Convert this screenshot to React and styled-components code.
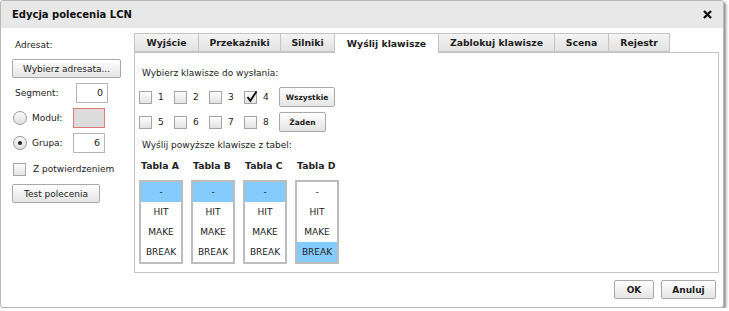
import React from 'react'
import styled, { createGlobalStyle } from 'styled-components'

const GlobalStyle = createGlobalStyle`
  html, body {
    margin: 0;
    padding: 0;
    background: #fff;
  }
  body {
    font-family: "DejaVu Sans", Verdana, sans-serif;
    font-size: 9px;
    color: #222;
  }
`

const tabs = [
  { label: 'Wyjście', width: 65 },
  { label: 'Przekaźniki', width: 83 },
  { label: 'Silniki', width: 55 },
  { label: 'Wyślij klawisze', width: 105, active: true },
  { label: 'Zablokuj klawisze', width: 117 },
  { label: 'Scena', width: 55 },
  { label: 'Rejestr', width: 62 },
]
const tables = [
  { name: 'Tabla A', selected: 0 },
  { name: 'Tabla B', selected: 0 },
  { name: 'Tabla C', selected: 0 },
  { name: 'Tabla D', selected: 3 },
]
const modes = ['-', 'HIT', 'MAKE', 'BREAK']

const Check = ({ checked }) => (
  <CheckBox>
    {checked && (
      <svg width="14" height="14" viewBox="0 0 14 14">
        <path d="M2.5 7 L5.3 10.8 L11.5 1.5" fill="none" stroke="#111" strokeWidth="1.9" />
      </svg>
    )}
  </CheckBox>
)

export default function App() {
  return (
    <>
      <GlobalStyle />
      <Dialog>
        <TitleBar>
          <span>Edycja polecenia LCN</span>
          <svg width="9" height="9" viewBox="0 0 9 9">
            <path d="M1 1 L8 8 M8 1 L1 8" stroke="#111" strokeWidth="2.4" />
          </svg>
        </TitleBar>
        <Body>
          <Side>
            <SideLabel>Adresat:</SideLabel>
            <Button $w={109}>Wybierz adresata...</Button>
            <FieldRow>
              <FieldLabel>Segment:</FieldLabel>
              <Input>0</Input>
            </FieldRow>
            <FieldRow>
              <Radio />
              <FieldLabel $radio>Moduł:</FieldLabel>
              <Input $disabled />
            </FieldRow>
            <FieldRow>
              <Radio $on />
              <FieldLabel $radio>Grupa:</FieldLabel>
              <Input>6</Input>
            </FieldRow>
            <ConfirmRow>
              <Check />
              <span>Z potwierdzeniem</span>
            </ConfirmRow>
            <Button $w={88} $top={7}>Test polecenia</Button>
          </Side>
          <TabArea>
            <TabBar>
              {tabs.map(t => (
                <Tab key={t.label} $w={t.width} $active={t.active}>{t.label}</Tab>
              ))}
            </TabBar>
            <Panel>
              <Text>Wybierz klawisze do wysłania:</Text>
              <KeyRow $top={8}>
                {[1, 2, 3, 4].map(n => (
                  <KeyItem key={n}>
                    <Check checked={n === 4} />
                    <span>{n}</span>
                  </KeyItem>
                ))}
                <SmallButton $w={56}>Wszystkie</SmallButton>
              </KeyRow>
              <KeyRow $top={5}>
                {[5, 6, 7, 8].map(n => (
                  <KeyItem key={n}>
                    <Check />
                    <span>{n}</span>
                  </KeyItem>
                ))}
                <SmallButton $w={47}>Żaden</SmallButton>
              </KeyRow>
              <Text $top={7}>Wyślij powyższe klawisze z tabel:</Text>
              <Tables>
                {tables.map(t => (
                  <TableCol key={t.name}>
                    <TableTitle>{t.name}</TableTitle>
                    <ListBox>
                      {modes.map((m, i) => (
                        <ListItem key={m} $selected={i === t.selected}>{m}</ListItem>
                      ))}
                    </ListBox>
                  </TableCol>
                ))}
              </Tables>
            </Panel>
          </TabArea>
        </Body>
        <Footer>
          <Button $w={40} $bold>OK</Button>
          <Button $w={55} $bold>Anuluj</Button>
        </Footer>
      </Dialog>
    </>
  )
}

const Dialog = styled.div`
  width: 722px;
  height: 306px;
  border: 1px solid #b8b8b8;
  border-radius: 3px;
  box-shadow: 2px 2px 3px rgba(0, 0, 0, 0.45);
  display: flex;
  flex-direction: column;
  overflow: hidden;
  background: #fff;
`

const TitleBar = styled.div`
  height: 27px;
  flex: none;
  background: #e8e8e8;
  display: flex;
  align-items: center;
  justify-content: space-between;
  padding: 0 11px 0 11px;
  font-weight: bold;
  font-size: 10px;
  color: #111;

  svg {
    display: block;
  }
`

const Body = styled.div`
  display: flex;
  padding-top: 5px;
  flex: none;
`

const Side = styled.div`
  width: 133px;
  flex: none;
  padding: 6px 0 0 11px;
  box-sizing: border-box;
  display: flex;
  flex-direction: column;
  align-items: flex-start;
`

const SideLabel = styled.div`
  height: 12px;
  line-height: 12px;
  padding-left: 3px;
  margin-bottom: 8px;
`

const Button = styled.div`
  box-sizing: border-box;
  height: 19px;
  width: ${p => p.$w}px;
  margin-top: ${p => p.$top || 0}px;
  border: 1px solid #a9a9a9;
  border-radius: 2px;
  background: linear-gradient(#ffffff, #e4e4e4);
  display: flex;
  align-items: center;
  justify-content: center;
  font-weight: ${p => (p.$bold ? 'bold' : 'normal')};
  color: #222;
  white-space: nowrap;
`

const FieldRow = styled.div`
  display: flex;
  align-items: center;
  height: 20px;
  margin-top: 5px;
  padding-left: 1px;
`

const FieldLabel = styled.span`
  width: ${p => (p.$radio ? '41px' : '61px')};
  padding-left: ${p => (p.$radio ? '0' : '2px')};
`

const Radio = styled.span`
  box-sizing: border-box;
  width: 14px;
  height: 14px;
  margin-right: 5px;
  border-radius: 50%;
  border: 1px solid #9a9a9a;
  background: linear-gradient(#fafafa, #e0e0e0);
  position: relative;

  &::after {
    content: '';
    display: ${p => (p.$on ? 'block' : 'none')};
    position: absolute;
    left: 4px;
    top: 4px;
    width: 4px;
    height: 4px;
    border-radius: 50%;
    background: #222;
  }
`

const Input = styled.div`
  box-sizing: border-box;
  width: 32px;
  height: 20px;
  border: 1px solid ${p => (p.$disabled ? '#e07a7a' : '#b5b5b5')};
  background: ${p => (p.$disabled ? '#dcdcdc' : '#fff')};
  text-align: right;
  padding: 0 4px;
  line-height: 18px;
  font-size: 9.5px;
`

const ConfirmRow = styled.div`
  display: flex;
  align-items: center;
  gap: 7px;
  height: 16px;
  margin-top: 8px;
  padding-left: 1px;
`

const CheckBox = styled.span`
  box-sizing: border-box;
  display: inline-block;
  width: 13px;
  height: 13px;
  flex: none;
  border: 1px solid #a5a5a5;
  background: linear-gradient(#fdfdfd, #e2e2e2);
  position: relative;

  svg {
    position: absolute;
    left: 0;
    top: -2px;
  }
`

const TabArea = styled.div`
  width: 585px;
  flex: none;
  display: flex;
  flex-direction: column;
`

const TabBar = styled.div`
  display: flex;
  height: 19px;
`

const Tab = styled.div`
  box-sizing: border-box;
  width: ${p => p.$w}px;
  height: ${p => (p.$active ? '20px' : '19px')};
  display: flex;
  align-items: center;
  justify-content: center;
  border: 1px solid #c4c4c4;
  border-bottom: ${p => (p.$active ? 'none' : '1px solid #c4c4c4')};
  margin-left: -1px;
  background: ${p => (p.$active ? '#fff' : 'linear-gradient(#f4f4f4, #e2e2e2)')};
  font-weight: bold;
  font-size: 9.3px;
  color: #222;
  position: relative;
  z-index: ${p => (p.$active ? 1 : 0)};

  &:first-child {
    margin-left: 0;
  }
`

const Panel = styled.div`
  box-sizing: border-box;
  height: 221px;
  border: 1px solid #c4c4c4;
  padding: 14px 0 0 4px;
  display: flex;
  flex-direction: column;
  align-items: flex-start;
`

const Text = styled.div`
  height: 12px;
  line-height: 12px;
  padding-left: 3px;
  margin-top: ${p => p.$top || 0}px;
`

const KeyRow = styled.div`
  display: flex;
  align-items: center;
  height: 20px;
  margin-top: ${p => p.$top}px;
`

const KeyItem = styled.div`
  width: 35px;
  display: flex;
  align-items: center;
  gap: 6px;
`

const SmallButton = styled(Button)`
  height: 20px;
  font-weight: bold;
  font-size: 7.5px;
  margin-left: 0;
`

const Tables = styled.div`
  display: flex;
  gap: 8px;
  margin-top: 9px;
`

const TableCol = styled.div`
  width: 44px;
  display: flex;
  flex-direction: column;
`

const TableTitle = styled.div`
  font-weight: bold;
  font-size: 9.3px;
  height: 12px;
  line-height: 12px;
  padding-left: 2px;
  margin-bottom: 8px;
  white-space: nowrap;
`

const ListBox = styled.div`
  box-sizing: border-box;
  width: 44px;
  border: 2px solid #bcbcbc;
  display: flex;
  flex-direction: column;
`

const ListItem = styled.div`
  height: 20px;
  line-height: 20px;
  text-align: center;
  font-size: 9px;
  background: ${p => (p.$selected ? '#86cbfd' : '#fff')};
`

const Footer = styled.div`
  display: flex;
  justify-content: flex-end;
  gap: 7px;
  padding: 7px 7px 0 0;
`
